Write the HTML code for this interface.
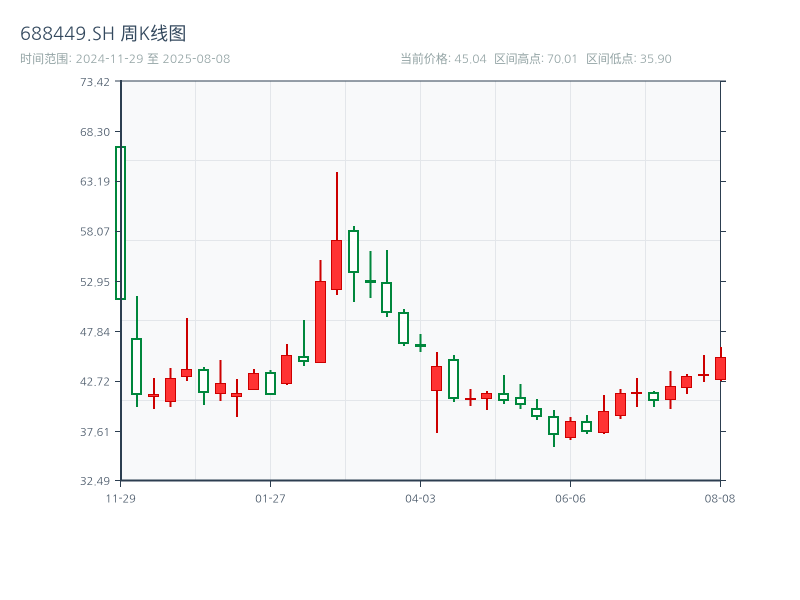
<!DOCTYPE html>
<html><head><meta charset="utf-8"><style>
html,body{margin:0;padding:0;background:#fff}
body{width:800px;height:600px;position:relative;overflow:hidden;font-family:"NanumGothic","WenQuanYi Zen Hei",sans-serif}
svg{position:absolute;left:0;top:0}
text{font-family:"NanumGothic","WenQuanYi Zen Hei",sans-serif}
.y{font-size:11px;fill:#465566;text-anchor:end}
.x{font-size:11px;fill:#465566;text-anchor:middle}
.s{font-size:12px;fill:#95a5a6}
.w{fill:none;stroke-width:2}
.r{fill:#ff3333;stroke:#cc0000;stroke-width:1}
.g{fill:#fff;stroke:#00873c;stroke-width:2}
</style></head><body>
<svg width="800" height="600" viewBox="0 0 800 600">
<text x="20" y="40" font-size="18" fill="#34495e" letter-spacing=".15">688449.SH 周K线图</text>
<text x="20" y="63" class="s" letter-spacing=".1">时间范围: 2024-11-29 至 2025-08-08</text>
<text x="400" y="63" class="s" letter-spacing="-.1">当前价格: 45.04</text>
<text x="494" y="63" class="s" letter-spacing="-.35">区间高点: 70.01</text>
<text x="586" y="63" class="s" letter-spacing="-.2">区间低点: 35.90</text>
<rect x="121" y="81" width="599" height="399" fill="#f8f9fa"/>
<path d="M195.5 81V480M270.5 81V480M345.5 81V480M420.5 81V480M495.5 81V480M570.5 81V480M645.5 81V480M121 160.5H720M121 240.5H720M121 320.5H720M121 400.5H720" stroke="#e3e6ea" stroke-width="1" fill="none"/>
<path d="M115 81H726M720.5 81V487M720 131.5H726M720 181.5H726M720 231.5H726M720 281.5H726M720 331.5H726M720 381.5H726M720 431.5H726M720 81.5H726M720 480.5H726" stroke="#2c3e50" stroke-width="1" fill="none"/>
<path class="w" stroke="#00873c" d="M120.5 147V299M137 296V407M204 367V405M270.5 370V394M304 320V366M354 226V302M370.5 251V298M387 250V317M404 309V346M420.5 334V352M454 355V402M504 375V404M520.5 384V409M537 399V420M554 410V447M587 415V434M654 391V407"/>
<path class="w" stroke="#cc0000" d="M154 378V409M170.5 368V407M187 318V381M220.5 360V401M237 379V417M254 369V390M287 344V385M320.5 260V362M337 172V295M437 352V433M470.5 389V406M487 391V410M570.5 417V440M604 395V434M620.5 389V419M637 378V407M670.5 371V409M687 374V394M704 355V382M721 347V381"/>
<rect class="g" x="116" y="147" width="9" height="152"/>
<rect class="g" x="132" y="339" width="9" height="55"/>
<rect class="r" x="148.5" y="394.5" width="10" height="2"/>
<rect class="r" x="165.5" y="378.5" width="10" height="23"/>
<rect class="r" x="181.5" y="369.5" width="10" height="7"/>
<rect class="g" x="199" y="370" width="9" height="22"/>
<rect class="r" x="215.5" y="383.5" width="10" height="10"/>
<rect class="r" x="231.5" y="393.5" width="10" height="3"/>
<rect class="r" x="248.5" y="373.5" width="10" height="16"/>
<rect class="g" x="266" y="373" width="9" height="21"/>
<rect class="r" x="281.5" y="355.5" width="10" height="28"/>
<rect class="g" x="299" y="357" width="9" height="4"/>
<rect class="r" x="315.5" y="281.5" width="10" height="81"/>
<rect class="r" x="331.5" y="240.5" width="10" height="49"/>
<rect class="g" x="349" y="231" width="9" height="41"/>
<rect x="365" y="280" width="11" height="3" fill="#00873c"/>
<rect class="g" x="382" y="283" width="9" height="29"/>
<rect class="g" x="399" y="313" width="9" height="30"/>
<rect x="415" y="344" width="11" height="3" fill="#00873c"/>
<rect class="r" x="431.5" y="366.5" width="10" height="24"/>
<rect class="g" x="449" y="360" width="9" height="38"/>
<rect x="465" y="398" width="11" height="2" fill="#cc0000"/>
<rect class="r" x="481.5" y="393.5" width="10" height="5"/>
<rect class="g" x="499" y="394" width="9" height="6"/>
<rect class="g" x="516" y="398" width="9" height="6"/>
<rect class="g" x="532" y="409" width="9" height="7"/>
<rect class="g" x="549" y="417" width="9" height="17"/>
<rect class="r" x="565.5" y="421.5" width="10" height="16"/>
<rect class="g" x="582" y="422" width="9" height="9"/>
<rect class="r" x="598.5" y="411.5" width="10" height="21"/>
<rect class="r" x="615.5" y="393.5" width="10" height="22"/>
<rect x="631" y="392" width="11" height="2" fill="#cc0000"/>
<rect class="g" x="649" y="393" width="9" height="7"/>
<rect class="r" x="665.5" y="386.5" width="10" height="13"/>
<rect class="r" x="681.5" y="376.5" width="10" height="11"/>
<rect x="698" y="374" width="11" height="2" fill="#cc0000"/>
<rect class="r" x="715.5" y="357.5" width="10" height="22"/>
<path d="M121 80V481M120 480.5H721" stroke="#2c3e50" stroke-width="2" fill="none"/>
<path d="M115 131.5H121M115 181.5H121M115 231.5H121M115 281.5H121M115 331.5H121M115 381.5H121M115 431.5H121M115 480.5H121M120.5 481V487M270.5 481V487M420.5 481V487M570.5 481V487" stroke="#2c3e50" stroke-width="1" fill="none"/>
<text x="110" y="86" class="y">73.42</text>
<text x="110" y="136" class="y">68.30</text>
<text x="110" y="185.5" class="y">63.19</text>
<text x="110" y="235.5" class="y">58.07</text>
<text x="110" y="286" class="y">52.95</text>
<text x="110" y="336" class="y">47.84</text>
<text x="110" y="385.5" class="y">42.72</text>
<text x="110" y="436" class="y">37.61</text>
<text x="110" y="485" class="y">32.49</text>
<text x="120.5" y="502.5" class="x">11-29</text>
<text x="270.5" y="502.5" class="x">01-27</text>
<text x="420.5" y="502.5" class="x">04-03</text>
<text x="570.5" y="502.5" class="x">06-06</text>
<text x="720" y="502.5" class="x">08-08</text>
</svg>
</body></html>
